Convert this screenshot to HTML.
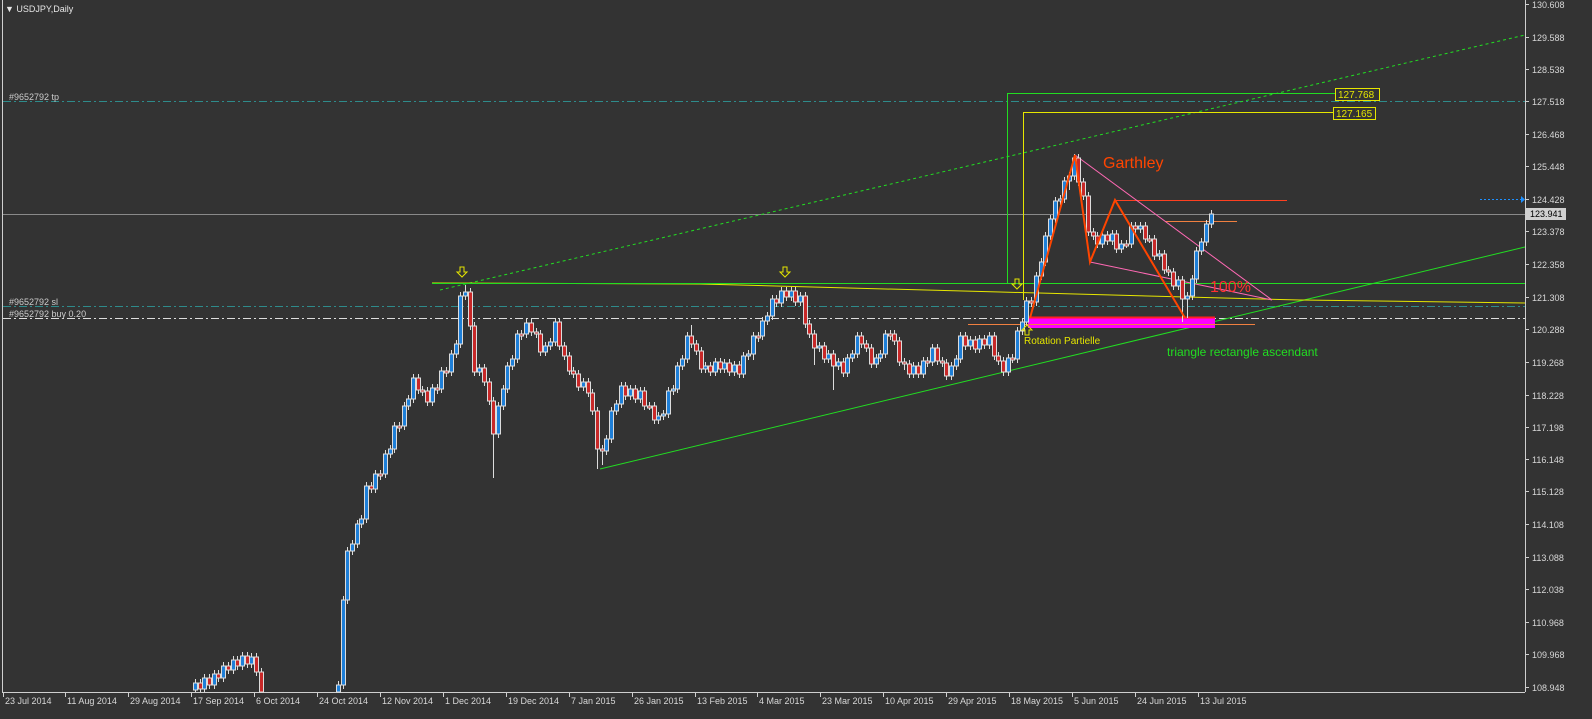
<!DOCTYPE html>
<html><head><meta charset="utf-8"><style>
html,body{margin:0;padding:0;background:#333333;width:1592px;height:719px;overflow:hidden}
svg{display:block;font-family:"Liberation Sans",sans-serif}
</style></head><body>
<svg width="1592" height="719" viewBox="0 0 1592 719" xmlns="http://www.w3.org/2000/svg">
<rect width="1592" height="719" fill="#333333"/>
<line x1="2.5" y1="0" x2="2.5" y2="692" stroke="#cfcfcf"/>
<line x1="1525.5" y1="0" x2="1525.5" y2="692" stroke="#cfcfcf"/>
<line x1="2" y1="692.5" x2="1525" y2="692.5" stroke="#cfcfcf"/>
<text x="5" y="12" fill="#e6e6e6" font-size="9">▼ USDJPY,Daily</text>
<line x1="3" y1="101.5" x2="1525" y2="101.5" stroke="#2e8b8b" stroke-dasharray="8,3,2,3"/>
<line x1="3" y1="306.5" x2="1525" y2="306.5" stroke="#2e8b8b" stroke-dasharray="8,3,2,3"/>
<line x1="3" y1="318.5" x2="1525" y2="318.5" stroke="#dddddd" stroke-dasharray="8,3,2,3"/>
<text x="9" y="100" fill="#cccccc" font-size="9">#9652792 tp</text>
<text x="9" y="305" fill="#cccccc" font-size="9">#9652792 sl</text>
<text x="9" y="317" fill="#cccccc" font-size="9">#9652792 buy 0.20</text>
<line x1="3" y1="214.5" x2="1525" y2="214.5" stroke="#8a8a8a"/>
<line x1="1480" y1="199.5" x2="1521" y2="199.5" stroke="#1e90ff" stroke-dasharray="2,2"/>
<polygon points="1521,196 1525,199.5 1521,203" fill="#1e90ff"/>
<line x1="440" y1="290" x2="1525" y2="35" stroke="#22dd22" stroke-dasharray="3,3"/>
<line x1="600" y1="469" x2="1525" y2="247" stroke="#22dd22"/>
<polyline points="432,283 700,284 1000,292 1300,300 1525,303" fill="none" stroke="#e6e600"/>
<line x1="432" y1="283.5" x2="1525" y2="283.5" stroke="#22dd22"/>
<polyline points="1007.5,283 1007.5,93.5 1335,93.5" fill="none" stroke="#22dd22"/>
<polyline points="1023.5,300 1023.5,112.5 1333,112.5" fill="none" stroke="#e6e600"/>
<rect x="1335.5" y="88.5" width="44" height="12" fill="#333" stroke="#e6e600"/>
<text x="1338" y="98" fill="#e6e600" font-size="10">127.768</text>
<rect x="1333.5" y="107.5" width="42" height="12" fill="#333" stroke="#e6e600"/>
<text x="1336" y="117" fill="#e6e600" font-size="10">127.165</text>
<rect x="1028" y="318" width="187" height="10" fill="#ff00ff"/>
<line x1="1028" y1="317.5" x2="1215" y2="317.5" stroke="#ff2020" stroke-width="2"/>
<line x1="968" y1="324.5" x2="1255" y2="324.5" stroke="#f08040"/>
<line x1="1115" y1="200.5" x2="1287" y2="200.5" stroke="#ff4020"/>
<line x1="1165" y1="221.5" x2="1237" y2="221.5" stroke="#f08040"/>
<line x1="1075" y1="155" x2="1272" y2="300" stroke="#ff69b4"/>
<line x1="1090" y1="262" x2="1272" y2="300" stroke="#ff69b4"/>

<path fill="none" stroke="#dddddd" d="M195.5 679V692M200.5 679V692M204.5 674V692M209.5 674V689M214.5 670V689M218.5 670V682M223.5 662V682M228.5 662V674M233.5 656V674M237.5 656V670M242.5 652V670M247.5 652V668M251.5 653V668M256.5 653V676M261.5 668V692
M338.5 681V692M343.5 596V689M347.5 547V604M352.5 540V555M357.5 520V548M361.5 515V528M366.5 482V523M371.5 482V493M375.5 470V493M380.5 470V480M385.5 450V478M390.5 445V458M394.5 422V453M399.5 422V432M404.5 402V430M408.5 395V410M413.5 374V403M418.5 374V394M422.5 386V396M427.5 387V406M432.5 384V406M437.5 384V394M441.5 367V393M446.5 367V377M451.5 350V376M456.5 340V358M460.5 292V348M465.5 285V300M470.5 288V330M474.5 322V376M479.5 364V376M484.5 364V386M489.5 378V405M493.5 397V478M498.5 402V438M503.5 385V410M507.5 362V393M512.5 355V370M517.5 330V363M521.5 330V340M526.5 319V338M531.5 319V336M536.5 328V338M540.5 330V356M545.5 342V356M550.5 338V350M555.5 318V346M559.5 318V350M564.5 342V360M569.5 352V375M573.5 367V378M578.5 370V391M583.5 378V391M588.5 378V397M592.5 389V415M597.5 407V469M602.5 445V465M606.5 435V455M611.5 407V443M616.5 400V415M621.5 382V408M625.5 382V400M630.5 385V400M635.5 385V403M640.5 387V403M644.5 387V410M649.5 402V410M654.5 402V424M658.5 412V424M663.5 410V420M668.5 387V418M673.5 385V395M677.5 362V393M682.5 355V370M687.5 332V363M691.5 325V348M696.5 340V355M701.5 347V373M705.5 362V373M710.5 362V376M715.5 358V376M720.5 358V373M724.5 359V373M729.5 359V376M734.5 361V376M739.5 361V378M743.5 352V378M748.5 350V360M753.5 332V360M758.5 332V342M762.5 317V340M767.5 312V325M772.5 295V320M776.5 295V307M781.5 287V307M786.5 287V301M791.5 287V301M795.5 287V306M800.5 292V306M805.5 292V328M809.5 320V338M814.5 330V365M819.5 342V352M824.5 342V363M828.5 350V363M833.5 350V390M838.5 358V370M843.5 358V377M847.5 354V377M852.5 350V362M857.5 332V358M861.5 332V348M866.5 340V352M871.5 344V368M876.5 354V368M880.5 350V362M885.5 330V358M890.5 330V340M894.5 330V345M899.5 337V366M904.5 358V370M909.5 360V378M913.5 362V378M918.5 362V378M923.5 357V378M927.5 357V367M932.5 344V366M937.5 344V365M942.5 357V367M946.5 359V380M951.5 362V380M956.5 355V370M960.5 332V363M965.5 332V350M970.5 336V350M975.5 336V353M979.5 335V353M984.5 335V349M989.5 332V349M994.5 332V360M998.5 352V365M1003.5 357V376M1008.5 354V376M1012.5 354V363M1017.5 327V363M1022.5 318V335M1026.5 297V326M1031.5 297V307M1036.5 272V306M1041.5 258V280M1045.5 232V266M1050.5 215V240M1055.5 197V223M1060.5 195V205M1064.5 177V203M1069.5 172V190M1074.5 154V180M1078.5 154V186M1083.5 178V200M1088.5 192V236M1093.5 228V240M1097.5 232V248M1102.5 231V248M1107.5 231V245M1112.5 230V245M1116.5 230V253M1121.5 240V253M1126.5 240V248M1131.5 222V248M1135.5 222V233M1140.5 222V233M1145.5 222V243M1149.5 235V243M1154.5 235V260M1159.5 250V260M1164.5 250V274M1168.5 266V276M1173.5 268V290M1178.5 276V290M1182.5 276V322M1187.5 292V318M1192.5 275V300M1196.5 247V283M1201.5 238V255M1206.5 220V246M1211.5 210V228"/>

<path fill="#1e7fd8" stroke="#dddddd" d="M193.5 683h4v7h-4zM202.5 678h4v11h-4zM212.5 674h4v11h-4zM221.5 666h4v12h-4zM231.5 660h4v10h-4zM240.5 656h4v10h-4zM249.5 657h4v7h-4z
M336.5 685h4v7h-4zM341.5 600h4v85h-4zM345.5 551h4v49h-4zM350.5 544h4v7h-4zM355.5 524h4v20h-4zM359.5 519h4v5h-4zM364.5 486h4v33h-4zM373.5 474h4v15h-4zM383.5 454h4v20h-4zM388.5 449h4v5h-4zM392.5 426h4v23h-4zM402.5 406h4v20h-4zM406.5 399h4v7h-4zM411.5 378h4v21h-4zM430.5 388h4v14h-4zM439.5 371h4v18h-4zM449.5 354h4v18h-4zM454.5 344h4v10h-4zM458.5 296h4v48h-4zM463.5 292h4v4h-4zM477.5 368h4v4h-4zM496.5 406h4v28h-4zM501.5 389h4v17h-4zM505.5 366h4v23h-4zM510.5 359h4v7h-4zM515.5 334h4v25h-4zM524.5 323h4v11h-4zM543.5 346h4v6h-4zM548.5 342h4v4h-4zM553.5 322h4v20h-4zM581.5 382h4v5h-4zM604.5 439h4v12h-4zM609.5 411h4v28h-4zM614.5 404h4v7h-4zM619.5 386h4v18h-4zM628.5 389h4v7h-4zM638.5 391h4v8h-4zM656.5 416h4v4h-4zM661.5 414h4v2h-4zM666.5 391h4v23h-4zM671.5 389h4v2h-4zM675.5 366h4v23h-4zM680.5 359h4v7h-4zM685.5 336h4v23h-4zM703.5 366h4v3h-4zM713.5 362h4v10h-4zM722.5 363h4v6h-4zM732.5 365h4v7h-4zM741.5 356h4v18h-4zM746.5 354h4v2h-4zM751.5 336h4v18h-4zM760.5 321h4v15h-4zM765.5 316h4v5h-4zM770.5 299h4v17h-4zM779.5 291h4v12h-4zM789.5 291h4v6h-4zM798.5 296h4v6h-4zM817.5 346h4v2h-4zM826.5 354h4v5h-4zM836.5 362h4v4h-4zM845.5 358h4v15h-4zM850.5 354h4v4h-4zM855.5 336h4v18h-4zM874.5 358h4v6h-4zM878.5 354h4v4h-4zM883.5 334h4v20h-4zM911.5 366h4v8h-4zM921.5 361h4v13h-4zM930.5 348h4v14h-4zM949.5 366h4v10h-4zM954.5 359h4v7h-4zM958.5 336h4v23h-4zM968.5 340h4v6h-4zM977.5 339h4v10h-4zM987.5 336h4v9h-4zM1006.5 358h4v14h-4zM1015.5 331h4v28h-4zM1020.5 322h4v9h-4zM1024.5 301h4v21h-4zM1034.5 276h4v26h-4zM1039.5 262h4v14h-4zM1043.5 236h4v26h-4zM1048.5 219h4v17h-4zM1053.5 201h4v18h-4zM1058.5 199h4v2h-4zM1062.5 181h4v18h-4zM1067.5 176h4v5h-4zM1072.5 158h4v18h-4zM1100.5 235h4v9h-4zM1110.5 234h4v7h-4zM1119.5 244h4v5h-4zM1129.5 226h4v18h-4zM1138.5 226h4v3h-4zM1157.5 254h4v2h-4zM1176.5 280h4v6h-4zM1185.5 296h4v3h-4zM1190.5 279h4v17h-4zM1194.5 251h4v28h-4zM1199.5 242h4v9h-4zM1204.5 224h4v18h-4zM1209.5 214h4v10h-4z"/>

<path fill="#c82828" stroke="#dddddd" d="M198.5 683h4v6h-4zM207.5 678h4v7h-4zM216.5 674h4v4h-4zM226.5 666h4v4h-4zM235.5 660h4v6h-4zM245.5 656h4v8h-4zM254.5 657h4v15h-4zM259.5 672h4v20h-4z
M369.5 486h4v3h-4zM378.5 474h4v2h-4zM397.5 426h4v2h-4zM416.5 378h4v12h-4zM420.5 390h4v2h-4zM425.5 391h4v11h-4zM435.5 388h4v2h-4zM444.5 371h4v2h-4zM468.5 292h4v34h-4zM472.5 326h4v46h-4zM482.5 368h4v14h-4zM487.5 382h4v19h-4zM491.5 401h4v33h-4zM519.5 334h4v2h-4zM529.5 323h4v9h-4zM534.5 332h4v2h-4zM538.5 334h4v18h-4zM557.5 322h4v24h-4zM562.5 346h4v10h-4zM567.5 356h4v15h-4zM571.5 371h4v3h-4zM576.5 374h4v13h-4zM586.5 382h4v11h-4zM590.5 393h4v18h-4zM595.5 411h4v38h-4zM600.5 449h4v2h-4zM623.5 386h4v10h-4zM633.5 389h4v10h-4zM642.5 391h4v15h-4zM647.5 406h4v2h-4zM652.5 406h4v14h-4zM689.5 336h4v8h-4zM694.5 344h4v7h-4zM699.5 351h4v18h-4zM708.5 366h4v6h-4zM718.5 362h4v7h-4zM727.5 363h4v9h-4zM737.5 365h4v9h-4zM756.5 336h4v2h-4zM774.5 299h4v4h-4zM784.5 291h4v6h-4zM793.5 291h4v11h-4zM803.5 296h4v28h-4zM807.5 324h4v10h-4zM812.5 334h4v14h-4zM822.5 346h4v13h-4zM831.5 354h4v12h-4zM841.5 362h4v11h-4zM859.5 336h4v8h-4zM864.5 344h4v4h-4zM869.5 348h4v16h-4zM888.5 334h4v2h-4zM892.5 334h4v7h-4zM897.5 341h4v21h-4zM902.5 362h4v2h-4zM907.5 364h4v10h-4zM916.5 366h4v8h-4zM925.5 361h4v2h-4zM935.5 348h4v13h-4zM940.5 361h4v2h-4zM944.5 363h4v13h-4zM963.5 336h4v10h-4zM973.5 340h4v9h-4zM982.5 339h4v6h-4zM992.5 336h4v20h-4zM996.5 356h4v5h-4zM1001.5 361h4v11h-4zM1010.5 358h4v2h-4zM1029.5 301h4v2h-4zM1076.5 158h4v24h-4zM1081.5 182h4v14h-4zM1086.5 196h4v36h-4zM1091.5 232h4v4h-4zM1095.5 236h4v8h-4zM1105.5 235h4v6h-4zM1114.5 234h4v15h-4zM1124.5 244h4v2h-4zM1133.5 226h4v3h-4zM1143.5 226h4v13h-4zM1147.5 239h4v2h-4zM1152.5 239h4v17h-4zM1162.5 254h4v16h-4zM1166.5 270h4v2h-4zM1171.5 272h4v14h-4zM1180.5 280h4v19h-4z"/>

<polyline points="1030,318 1075,155 1090,262 1115,200 1185,318" fill="none" stroke="#ff4500" stroke-width="2"/>
<text x="1103" y="168" fill="#ff4500" font-size="16">Garthley</text>
<text x="1210" y="292" fill="#ff3030" font-size="16">100%</text>
<text x="1024" y="344" fill="#e6e600" font-size="10">Rotation Partielle</text>
<text x="1167" y="356" fill="#22dd22" font-size="12">triangle rectangle ascendant</text>
<g fill="none" stroke="#e6e600"><path d="M460,267h4v5h3l-5,5l-5,-5h3z"/><path d="M783,267h4v5h3l-5,5l-5,-5h3z"/><path d="M1015,279h4v5h3l-5,5l-5,-5h3z"/><path d="M1025,335h4v-5h3l-5,-5l-5,5h3z"/></g>

<g stroke="#cfcfcf">
<path d="M1525 4.5h4M1525 37.5h4M1525 69.5h4M1525 101.5h4M1525 134.5h4M1525 166.5h4M1525 199.5h4M1525 231.5h4M1525 264.5h4M1525 297.5h4M1525 329.5h4M1525 362.5h4M1525 395.5h4M1525 427.5h4M1525 459.5h4M1525 491.5h4M1525 524.5h4M1525 557.5h4M1525 589.5h4M1525 622.5h4M1525 654.5h4M1525 687.5h4"/>
<path d="M3.5 692v5M65.5 692v5M128.5 692v5M191.5 692v5M254.5 692v5M317.5 692v5M380.5 692v5M443.5 692v5M506.5 692v5M569.5 692v5M632.5 692v5M695.5 692v5M757.5 692v5M820.5 692v5M883.5 692v5M946.5 692v5M1009.5 692v5M1072.5 692v5M1135.5 692v5M1198.5 692v5"/>
</g>
<g fill="#d8d8d8" font-size="9">
<text x="1532" y="8">130.608</text><text x="1532" y="41">129.588</text><text x="1532" y="73">128.538</text><text x="1532" y="105">127.518</text><text x="1532" y="138">126.468</text><text x="1532" y="170">125.448</text><text x="1532" y="203">124.428</text><text x="1532" y="235">123.378</text><text x="1532" y="268">122.358</text><text x="1532" y="301">121.308</text><text x="1532" y="333">120.288</text><text x="1532" y="366">119.268</text><text x="1532" y="399">118.228</text><text x="1532" y="431">117.198</text><text x="1532" y="463">116.148</text><text x="1532" y="495">115.128</text><text x="1532" y="528">114.108</text><text x="1532" y="561">113.088</text><text x="1532" y="593">112.038</text><text x="1532" y="626">110.968</text><text x="1532" y="658">109.968</text><text x="1532" y="691">108.948</text>
<text x="5" y="704">23 Jul 2014</text><text x="67" y="704">11 Aug 2014</text><text x="130" y="704">29 Aug 2014</text><text x="193" y="704">17 Sep 2014</text><text x="256" y="704">6 Oct 2014</text><text x="319" y="704">24 Oct 2014</text><text x="382" y="704">12 Nov 2014</text><text x="445" y="704">1 Dec 2014</text><text x="508" y="704">19 Dec 2014</text><text x="571" y="704">7 Jan 2015</text><text x="634" y="704">26 Jan 2015</text><text x="697" y="704">13 Feb 2015</text><text x="759" y="704">4 Mar 2015</text><text x="822" y="704">23 Mar 2015</text><text x="885" y="704">10 Apr 2015</text><text x="948" y="704">29 Apr 2015</text><text x="1011" y="704">18 May 2015</text><text x="1074" y="704">5 Jun 2015</text><text x="1137" y="704">24 Jun 2015</text><text x="1200" y="704">13 Jul 2015</text>
</g>
<rect x="1526" y="208" width="40" height="12" fill="#d0d0d0"/>
<text x="1530" y="217" fill="#000" font-size="9">123.941</text>
</svg>
</body></html>
